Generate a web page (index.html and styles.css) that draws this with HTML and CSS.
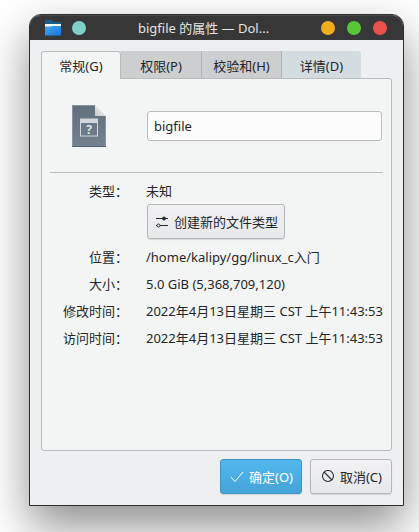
FILE: index.html
```html
<!DOCTYPE html>
<html lang="zh-CN">
<head>
<meta charset="utf-8">
<title>bigfile 的属性 — Dolphin</title>
<link rel="stylesheet" href="styles.css">
</head>
<body>
<main class="window">
  <header class="titlebar">
    <svg class="folder" width="16" height="16" viewBox="0 0 16 16">
      <defs><linearGradient id="fold" x1="0" y1="0" x2="1" y2="1"><stop offset="0" stop-color="#4ba5ed"/><stop offset="1" stop-color="#1177dc"/></linearGradient></defs>
      <path d="M0 0h7l1 2h8v7H0z" fill="#195d88"/>
      <path d="M0 4h16v4H0z" fill="#f5f8fa"/>
      <path d="M0 6.5h6l1-.5h9V15.500H0z" fill="url(#fold)"/>
    </svg>
    <span class="dot pin"></span>
    <h1 class="title">bigfile 的属性 — Dol...</h1>
    <span class="dot minimize"></span>
    <span class="dot maximize"></span>
    <span class="dot close"></span>
  </header>
  <div class="content">
    <nav class="tabs">
      <span class="tab active">常规(G)</span>
      <span class="tab">权限(P)</span>
      <span class="tab checksums">校验和(H)</span>
      <span class="tab hover">详情(D)</span>
    </nav>
    <section class="panel">
      <div class="head">
        <svg class="file" width="34" height="42" viewBox="0 0 34 42">
          <defs>
            <linearGradient id="doc" x1="0" y1="0" x2="0" y2="1"><stop offset="0" stop-color="#616e7c"/><stop offset="1" stop-color="#748391"/></linearGradient>
            <linearGradient id="corner" x1="0" y1="1" x2="1" y2="0"><stop offset="0" stop-color="#c3c6c9"/><stop offset=".5" stop-color="#e0e2e3"/></linearGradient>
          </defs>
          <path d="M0 0h23v11h11v31H0z" fill="url(#doc)"/>
          <path d="M.5 41V.5H23" fill="none" stroke="#8b959f"/>
          <path d="M33.500 11v30" stroke="#8b959f"/>
          <path d="M0 41.500h34" stroke="#53606d"/>
          <path d="M23 0l11 11H23z" fill="url(#corner)"/>
          <path d="M8 13.500h18v18H8z" fill="#d3d6da"/>
          <path d="M9 18h16v12.500H9z" fill="#6b7a88"/>
          <text x="17" y="28.500" text-anchor="middle" class="question">?</text>
        </svg>
        <input class="name" type="text" value="bigfile" aria-label="名称">
      </div>
      <dl class="props">
        <dt>类型：</dt><dd>未知</dd>
        <dd class="action">
          <button class="button">
            <svg class="sliders" width="14" height="12" viewBox="0 0 14 12" fill="none" stroke="#26292c">
              <path d="M1 2.500h12M1 9.500h1M5 9.500h8"/><circle cx="9" cy="2.500" r="1.500" fill="#26292c"/><circle cx="3.500" cy="9.500" r="1.500"/>
            </svg>创建新的文件类型</button>
        </dd>
        <dt>位置：</dt><dd>/home/kalipy/gg/linux_c入门</dd>
        <dt>大小：</dt><dd>5.0 GiB (5,368,709,120)</dd>
        <dt>修改时间：</dt><dd>2022年4月13日星期三 CST 上午11:43:53</dd>
        <dt>访问时间：</dt><dd>2022年4月13日星期三 CST 上午11:43:53</dd>
      </dl>
    </section>
    <footer class="actions">
      <button class="button primary">
        <svg width="14" height="14" viewBox="0 0 14 14" fill="none" stroke="#fff"><path d="M1 7l4 4.500L13 2"/></svg>确定(O)</button>
      <button class="button">
        <svg width="14" height="14" viewBox="0 0 14 14" fill="none" stroke="#2b2e31" stroke-width="1.100"><circle cx="7" cy="6" r="5.500"/><path d="M3 2l8 8"/></svg>取消(C)</button>
    </footer>
  </div>
</main>
</body>
</html>
```
FILE: styles.css
```css
* {
  box-sizing: border-box;
}

body {
  margin: 0;
  padding: 14px 15px 26px 29px;
  height: 532px;
  overflow: hidden;
  background: #fff;
  color: #232629;
  font: 13px/18px "Noto Sans", "Noto Sans CJK SC", sans-serif;
  white-space: nowrap;
}

.window {
  height: 492px;
  display: flex;
  flex-direction: column;
  border: 1px solid #2d2d2d;
  border-radius: 12px 12px 0 0;
  background: #eeeff1;
  box-shadow: 0 20px 46px rgba(0, 0, 0, .45);
}

.titlebar {
  height: 25px;
  flex: none;
  display: flex;
  align-items: center;
  padding: 0 16px 0 15px;
  border-top: 1px solid #4a4a4a;
  border-radius: 11px 11px 0 0;
  background: #373737;
  color: #e4e4e4;
}

.dot {
  width: 14px;
  height: 14px;
  border-radius: 50%;
}

.pin {
  margin-left: 11px;
  background: #7fd1c8;
}

.title {
  flex: 1;
  margin: -1px 0 0 52px;
  font-size: 13px;
  font-weight: 400;
}

.minimize {
  background: #f1ae1b;
}

.maximize {
  margin: 0 12px;
  background: #58c837;
}

.close {
  background: #e9524a;
}

.content {
  flex: 1;
  display: flex;
  flex-direction: column;
  padding: 11px;
}

.tabs {
  display: flex;
  height: 27px;
}

.tab {
  width: 81px;
  padding-top: 6px;
  border-right: 1px solid #b0b3b6;
  background: #cdced0;
  text-align: center;
}

.tab.active {
  position: relative;
  width: 80px;
  height: 28px;
  padding-top: 5px;
  border: 1px solid #b9bcbe;
  border-bottom: 0;
  border-radius: 3px 3px 0 0;
  background: #f3f5f4;
}

.tab.checksums {
  width: 80px;
}

.tab.hover {
  width: 79px;
  border: 0;
  border-radius: 0 3px 0 0;
  background: #d5dce0;
}

.panel {
  height: 373px;
  padding: 0 8px;
  border: 1px solid #b9bcbd;
  border-radius: 0 3px 3px 3px;
  background: #f3f5f4;
}

.head {
  height: 94px;
  display: flex;
  align-items: center;
  padding: 0 1px 0 22px;
  border-bottom: 1px solid #b9bcbd;
}

.file {
  margin-right: 41px;
}

.question {
  fill: #e1e4e6;
  font-size: 12px;
  font-weight: 700;
}

.name {
  flex: 1;
  min-width: 0;
  height: 30px;
  padding: 0 6px;
  border: 1px solid #b9bcbd;
  border-radius: 3px;
  background: #fcfcfc;
  color: inherit;
  font: inherit;
}

.props {
  display: grid;
  grid-template-columns: 78px 237px;
  grid-template-rows: 18px 30px 18px 18px 18px 18px;
  gap: 9px 18px;
  margin: 9px 0 0;
}

.props dt {
  text-align: right;
}

.props dd {
  margin: 0;
}

.props .action {
  grid-column: 2;
  margin-top: -5px;
  padding-left: 1px;
}

.button {
  height: 35px;
  display: flex;
  align-items: center;
  gap: 5px;
  padding: 0 6px 0 7px;
  border: 1px solid #b4b6b8;
  border-radius: 3px;
  background: linear-gradient(#f1f1f3, #e7e8ea);
  box-shadow: 0 1px 1px rgba(0, 0, 0, .12);
  color: #232629;
  font: inherit;
}

.actions {
  display: flex;
  justify-content: flex-end;
  gap: 8px;
  margin-top: 8px;
}

.actions .button {
  width: 82px;
  padding: 0 9px 0 10px;
}

.actions .primary {
  padding: 0 8px 0 9px;
  border-color: #3f96c6;
  background: linear-gradient(#52b8ee, #45a3d6);
  color: #fff;
}
```
